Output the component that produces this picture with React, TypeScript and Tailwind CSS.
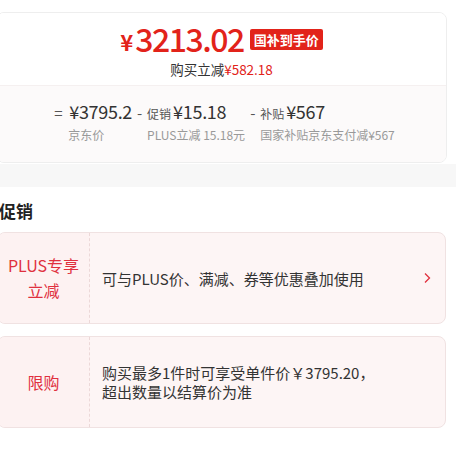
import React from "react"

const font = { fontFamily: '"Noto Sans CJK SC", "Noto Sans", sans-serif' }

function Part({ op, tag, value, label, opW }: { op: string; tag?: string; value: string; label: string; opW: string }) {
  return (
    <div className="flex flex-col">
      <div className="flex items-baseline text-[#333]">
        <span className={`text-[15px] text-[#555] ${opW}`}>{op}</span>
        {tag && <span className="text-[12px] text-[#555] mr-[2px]">{tag}</span>}
        <span className="text-[18px] leading-[26px] tracking-[-0.3px] text-[#333]">{value}</span>
      </div>
      <div className={`text-[12px] leading-[20px] text-[#999] whitespace-nowrap ${op === "=" ? "pl-[14px]" : "pl-[10px]"}`}>{label}</div>
    </div>
  )
}

function Promo({ title, children, arrow }: { title: React.ReactNode; children: React.ReactNode; arrow?: boolean }) {
  return (
    <div className="flex w-[449px] h-[92px] rounded-[8px] border border-[#f0e2e2] bg-[#fdf5f5] overflow-hidden">
      <div className="w-[92px] shrink-0 flex items-center justify-center text-center border-r border-dashed border-[#ecd8d8] bg-[#fdf2f2] text-[#e0303e] text-[16px] leading-[25px]">
        {title}
      </div>
      <div className="flex-1 flex items-center pl-[12px] pr-[14px] text-[#333] text-[15px] leading-[19px]">
        <div className="flex-1">{children}</div>
        {arrow && (
          <svg width="8" height="12" viewBox="0 0 8 12" className="shrink-0">
            <path d="M2 1.5 L6.5 6 L2 10.5" fill="none" stroke="#e0303e" strokeWidth="1.3" />
          </svg>
        )}
      </div>
    </div>
  )
}

export default function App() {
  return (
    <div className="w-[456px] h-[470px] bg-white overflow-hidden" style={font}>
      <div className="pt-[12px]">
        <div className="-ml-[4px] w-[451px] rounded-[8px] border border-[#eeeeee] overflow-hidden">
          <div className="h-[72px] flex flex-col items-center pt-[7px] bg-white">
            <div className="flex items-center h-[36px]">
              <span className="text-[#e2231a] text-[22px] leading-[26px] font-bold mr-[2px] mt-[5px]">¥</span>
              <span className="text-[#e2231a] text-[32px] leading-[36px] font-medium tracking-[-1.5px]">3213.02</span>
              <span className="ml-[6px] mt-[3px] bg-[#e2231a] text-white text-[13px] font-bold leading-[21px] px-[4px] rounded-[2px]">国补到手价</span>
            </div>
            <div className="mt-[4px] text-[13.5px] leading-[18px] text-[#333]">
              购买立减<span className="text-[#e2231a]">¥582.18</span>
            </div>
          </div>
          <div className="h-[77px] bg-[#fcfafa] border-t border-[#f5f0f0] flex justify-center gap-[5px] pt-[12px] pl-[6px]">
            <Part op="=" opW="w-[15px]" value="¥3795.2" label="京东价" />
            <Part op="-" opW="w-[10px]" tag="促销" value="¥15.18" label="PLUS立减 15.18元" />
            <Part op="-" opW="w-[10px]" tag="补贴" value="¥567" label="国家补贴京东支付减¥567" />
          </div>
        </div>
      </div>
      <div className="h-[23px] bg-[#f7f7f7] mt-[1px]" />
      <div className="-ml-[1px] pt-[13px] pb-[10px] text-[17px] leading-[22px] font-bold text-[#222]">促销</div>
      <div className="-ml-[3px] flex flex-col gap-[12px]">
        <Promo
          arrow
          title={
            <span>
              PLUS专享
              <br />
              立减
            </span>
          }
        >
          可与PLUS价、满减、券等优惠叠加使用
        </Promo>
        <Promo title="限购">
          购买最多1件时可享受单件价￥3795.20，
          <br />
          超出数量以结算价为准
        </Promo>
      </div>
    </div>
  )
}
